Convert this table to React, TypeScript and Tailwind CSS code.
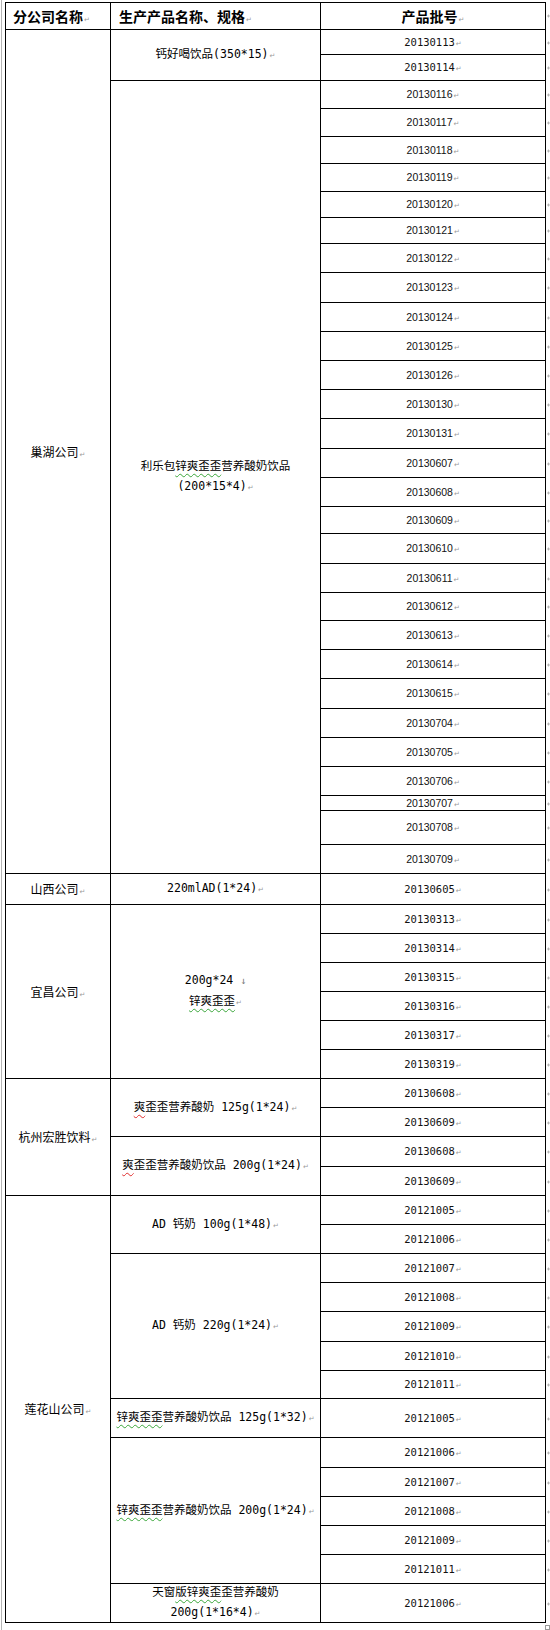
import type { ReactNode } from "react";

// Word-style table of batch numbers per branch company

const cjk = "font-['Noto_Sans_CJK_SC',sans-serif]";
const mixed = "font-['DejaVu_Sans_Mono','Noto_Sans_CJK_SC',monospace]";

const Ret = () => (
  <span className="ml-px font-['DejaVu_Sans',sans-serif] text-[7px] font-normal text-[#9a9a9a]">↵</span>
);

const Green = ({ children }: { children: ReactNode }) => (
  <span className="underline decoration-wavy decoration-[#3aa63a] decoration-1 underline-offset-[3px]">{children}</span>
);

const Red = ({ children }: { children: ReactNode }) => (
  <span className="underline decoration-wavy decoration-[#e02b2b] decoration-1 underline-offset-[3px]">{children}</span>
);

interface Product {
  name: ReactNode;
  span: string;
  mono: boolean;
  batches: string[];
}

interface Group {
  company: string;
  span: string;
  products: Product[];
}

const groups: Group[] = [
  {
    company: "巢湖公司",
    span: "row-span-30",
    products: [
      { name: <>钙好喝饮品(350*15)<Ret /></>, span: "row-span-2", mono: true, batches: ["20130113", "20130114"] },
      {
        name: (
          <>
            利乐包<Green>锌爽歪歪</Green>营养酸奶饮品
            <br />
            (200*15*4)<Ret />
          </>
        ),
        span: "row-span-28",
        mono: false,
        batches: [
          "20130116", "20130117", "20130118", "20130119", "20130120", "20130121", "20130122",
          "20130123", "20130124", "20130125", "20130126", "20130130", "20130131", "20130607",
          "20130608", "20130609", "20130610", "20130611", "20130612", "20130613", "20130614",
          "20130615", "20130704", "20130705", "20130706", "20130707", "20130708", "20130709",
        ],
      },
    ],
  },
  {
    company: "山西公司",
    span: "row-span-1",
    products: [{ name: <>220mlAD(1*24)<Ret /></>, span: "row-span-1", mono: true, batches: ["20130605"] }],
  },
  {
    company: "宜昌公司",
    span: "row-span-6",
    products: [
      {
        name: (
          <>
            200g*24 <span className="text-[10px] text-[#777]">↓</span>
            <br />
            <Green>锌爽歪歪</Green><Ret />
          </>
        ),
        span: "row-span-6",
        mono: true,
        batches: ["20130313", "20130314", "20130315", "20130316", "20130317", "20130319"],
      },
    ],
  },
  {
    company: "杭州宏胜饮料",
    span: "row-span-4",
    products: [
      { name: <><Red>爽</Red>歪歪营养酸奶 125g(1*24)<Ret /></>, span: "row-span-2", mono: true, batches: ["20130608", "20130609"] },
      { name: <><Red>爽</Red>歪歪营养酸奶饮品 200g(1*24)<Ret /></>, span: "row-span-2", mono: true, batches: ["20130608", "20130609"] },
    ],
  },
  {
    company: "莲花山公司",
    span: "row-span-14",
    products: [
      { name: <>AD 钙奶 100g(1*48)<Ret /></>, span: "row-span-2", mono: true, batches: ["20121005", "20121006"] },
      {
        name: <>AD 钙奶 220g(1*24)<Ret /></>,
        span: "row-span-5",
        mono: true,
        batches: ["20121007", "20121008", "20121009", "20121010", "20121011"],
      },
      { name: <><Green>锌爽歪歪</Green>营养酸奶饮品 125g(1*32)<Ret /></>, span: "row-span-1", mono: true, batches: ["20121005"] },
      {
        name: <><Green>锌爽歪歪</Green>营养酸奶饮品 200g(1*24)<Ret /></>,
        span: "row-span-5",
        mono: true,
        batches: ["20121006", "20121007", "20121008", "20121009", "20121011"],
      },
      {
        name: (
          <>
            天窗<Green>版锌爽歪</Green>歪营养酸奶
            <br />
            200g(1*16*4)<Ret />
          </>
        ),
        span: "row-span-1",
        mono: true,
        batches: ["20121006"],
      },
    ],
  },
];

// end-of-row marker, only its left part shows at the page edge
const RowMark = () => (
  <div className="col-start-4 flex items-center overflow-hidden pl-px">
    <svg width="4" height="6" viewBox="0 0 4 6" className="block">
      <path d="M0 3h4M2 1v4" stroke="#a6a6a6" strokeWidth="1" fill="none" />
    </svg>
  </div>
);

export default function App() {
  const cells: ReactNode[] = [];

  groups.forEach((g, gi) => {
    g.products.forEach((p, pi) => {
      p.batches.forEach((b, bi) => {
        if (pi === 0 && bi === 0) {
          cells.push(
            <div
              key={`g${gi}`}
              className={`${g.span} col-start-1 flex items-center justify-center border-b border-l border-r border-black text-center text-[12px] text-black ${cjk}`}
            >
              <span>
                {g.company}
                <Ret />
              </span>
            </div>
          );
        }
        if (bi === 0) {
          cells.push(
            <div
              key={`p${gi}-${pi}`}
              className={`${p.span} col-start-2 flex items-center justify-center whitespace-nowrap border-b border-r border-black text-center text-[11.5px] leading-[20px] text-black ${mixed}`}
            >
              <span>{p.name}</span>
            </div>
          );
        }
        cells.push(
          <div
            key={`b${gi}-${pi}-${bi}`}
            className={`col-start-3 flex items-center justify-center border-b border-r border-black text-[10.5px] leading-none text-[#111] ${
              p.mono ? "font-['DejaVu_Sans_Mono',monospace]" : "font-['Liberation_Sans',sans-serif]"
            }`}
          >
            <span>
              {b}
              <Ret />
            </span>
          </div>
        );
        cells.push(<RowMark key={`m${gi}-${pi}-${bi}`} />);
      });
    });
  });

  return (
    <div className="h-[1630px] w-[550px] overflow-hidden bg-white pl-px">
      <div className="h-full border-l border-[#b4b4b4] pl-[3px] pt-[2px]">
        <div className="grid grid-cols-[106px_210px_225px_4px] grid-rows-[28px_25px_26px_28px_28px_27px_28px_26px_26px_29px_30px_29px_29px_29px_29px_30px_29px_29px_27px_30px_29px_28px_29px_29px_30px_29px_29px_29px_15px_34px_29px_31px_29px_29px_29px_29px_29px_29px_29px_29px_30px_29px_29px_29px_29px_29px_30px_29px_28px_39px_30px_29px_29px_29px_29px_39px]">
          {/* header */}
          <div className={`col-start-1 flex items-center border border-black pl-[7px] text-[14px] font-bold text-black ${cjk}`}>
            <span>
              分公司名称
              <Ret />
            </span>
          </div>
          <div className={`col-start-2 flex items-center border-b border-r border-t border-black pl-[8px] text-[14px] font-bold text-black ${cjk}`}>
            <span>
              生产产品名称、规格
              <Ret />
            </span>
          </div>
          <div className={`col-start-3 flex items-center justify-center border-b border-r border-t border-black text-[14px] font-bold text-black ${cjk}`}>
            <span>
              产品批号
              <Ret />
            </span>
          </div>
          <RowMark />
          {cells}
        </div>
        <div className="mt-[2px] flex justify-end">
          <div className="h-[5px] w-[5px] border border-[#9a9a9a]" />
        </div>
      </div>
    </div>
  );
}
